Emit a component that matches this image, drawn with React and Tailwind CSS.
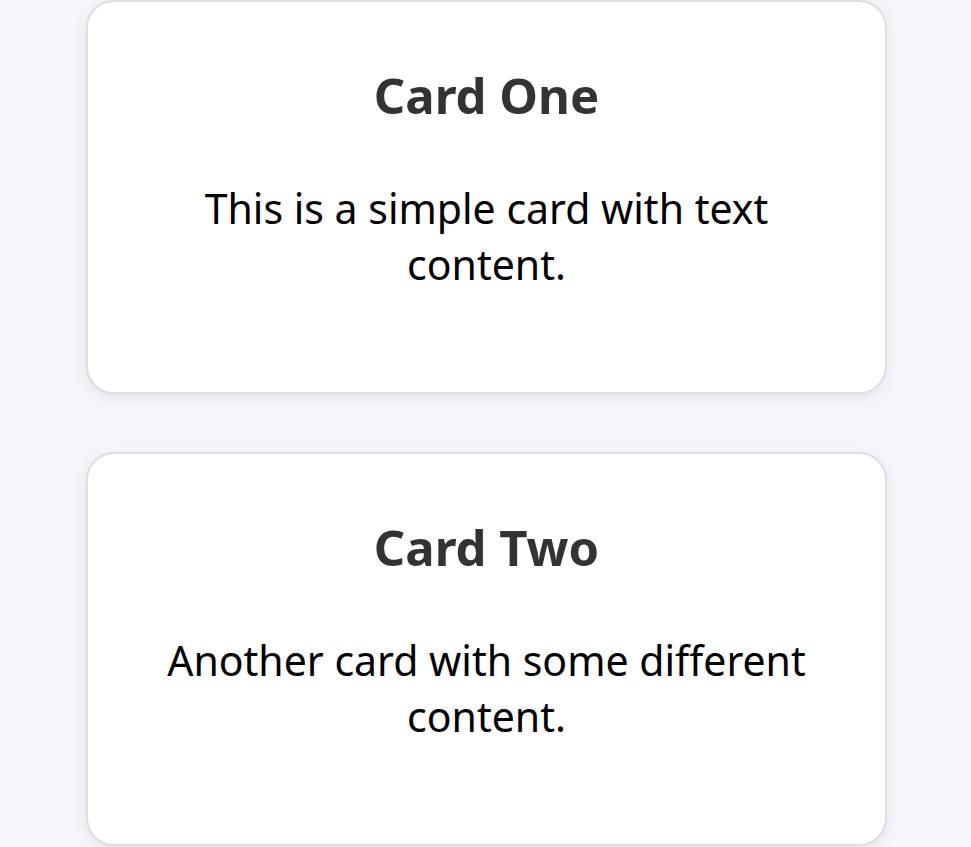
const cards = [
  { title: "Card One", body: "This is a simple card with text content." },
  { title: "Card Two", body: "Another card with some different content." },
];

export default function App() {
  return (
    <div className="min-h-screen bg-[#f5f6fa] flex flex-col items-center gap-[58px] pb-10 font-['Noto_Sans',sans-serif]">
      {cards.map((card) => (
        <div
          key={card.title}
          className="w-[801px] ml-[2px] bg-white border-2 border-[#dedede] rounded-[28px] shadow-[0_4px_14px_rgba(0,0,0,0.08)] px-[56px] pt-[64px] pb-[100px] text-center"
        >
          <h2 className="text-[49px] leading-[58px] font-bold text-[#333]">{card.title}</h2>
          <p className="mt-[56px] text-[41px] leading-[56px] text-black">{card.body}</p>
        </div>
      ))}
    </div>
  );
}
